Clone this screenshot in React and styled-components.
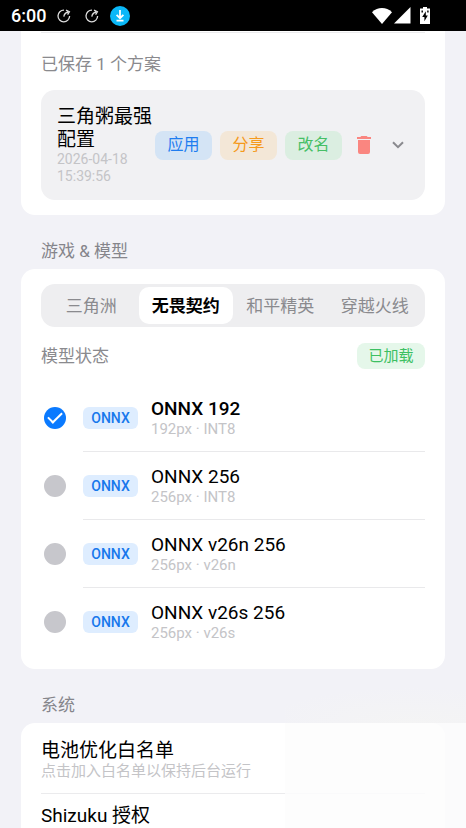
import React, { useState } from "react";
import styled, { createGlobalStyle } from "styled-components";

const GlobalStyle = createGlobalStyle`
  *, *::before, *::after { box-sizing: border-box; }
  html, body { margin: 0; height: 100%; overflow: hidden; }
  body {
    background: #f2f2f7;
    color: #000;
    font-family: Roboto, "Noto Sans CJK SC", sans-serif;
    -webkit-font-smoothing: antialiased;
  }
  #root { height: 100%; }
  button, input { font: inherit; margin: 0; }
  h2, p { margin: 0; font-weight: 400; }
`;

const Screen = styled.div`
  position: relative;
  height: 100%;
  display: flex;
  flex-direction: column;
  overflow: hidden;
`;

const StatusBar = styled.header`
  flex: none;
  height: 31px;
  padding: 0 36px 0 11px;
  display: flex;
  align-items: center;
  justify-content: space-between;
  background: #000;
  color: #fff;
`;

const StatusGroup = styled.div`
  display: flex;
  align-items: center;
  gap: ${(p) => p.$gap}px;
`;

const Clock = styled.span`
  font-size: 18px;
  font-weight: 500;
  line-height: 22px;
`;

const Content = styled.main`
  flex: 1;
  min-height: 0;
  overflow: hidden;
  padding: 0 21px;
`;

const Card = styled.section`
  background: #fff;
  border-radius: ${(p) => (p.$continued ? "0 0 14px 14px" : "14px")};
  padding: ${(p) => p.$pad || "15px 20px 14px"};
`;

const Rule = styled.div`
  height: 1px;
  background: #ebebed;
`;

const Caption = styled.p`
  font-size: 17px;
  line-height: 24px;
  color: #8a8a8e;
`;

const CaptionRow = styled.div`
  padding-top: 19px;
`;

const SectionTitle = styled.h2`
  padding: 24px 20px 6px;
  font-size: 17px;
  line-height: 24px;
  color: #85858b;
`;

const Preset = styled.div`
  display: flex;
  align-items: center;
  margin-top: 14px;
  padding: 15px 16px;
  border-radius: 14px;
  background: #f1f1f3;
`;

const PresetText = styled.div`
  flex: 1;
  min-width: 0;
`;

const ItemTitle = styled.div`
  font-size: 19px;
  line-height: 23px;
  font-weight: ${(p) => (p.$strong ? 500 : 400)};
`;

const ItemNote = styled.div`
  font-size: ${(p) => p.$size || 15}px;
  line-height: ${(p) => p.$line || 18}px;
  color: #c4c4c7;
`;

const Actions = styled.div`
  display: flex;
  gap: 8px;
`;

const tones = {
  blue: ["#d4e4f5", "#1f7df0"],
  orange: ["#f3e7d7", "#f59a1c"],
  green: ["#dbeee1", "#46bf66"],
};

const ActionButton = styled.button`
  width: 57px;
  height: 29px;
  padding: 0;
  border: 0;
  border-radius: 8px;
  font-size: 16px;
  line-height: 28px;
  background: ${(p) => tones[p.$tone][0]};
  color: ${(p) => tones[p.$tone][1]};
`;

const IconButton = styled.button`
  width: ${(p) => p.$width}px;
  height: 34px;
  padding: 0;
  border: 0;
  background: none;
  display: grid;
  place-items: center;
`;

const Segments = styled.div`
  display: grid;
  grid-template-columns: repeat(4, 1fr);
  padding: 3px;
  height: 43px;
  border-radius: 14px;
  background: #eeeef0;
`;

const Segment = styled.button`
  padding: 0 0 2px;
  border: 0;
  border-radius: 10px;
  font-size: 17px;
  font-weight: ${(p) => (p.$active ? 700 : 400)};
  background: ${(p) => (p.$active ? "#fff" : "transparent")};
  color: ${(p) => (p.$active ? "#000" : "#8a8a8e")};
`;

const StateRow = styled.div`
  display: flex;
  align-items: center;
  justify-content: space-between;
  padding: 16px 0 15px;
`;

const StateBadge = styled.span`
  min-width: 68px;
  border-radius: 8px;
  text-align: center;
  font-size: 15px;
  line-height: 26px;
  background: #e5f7ea;
  color: #3cc062;
`;

const ModelRow = styled.label`
  display: flex;
  align-items: center;
  padding-left: 3px;
`;

const Radio = styled.input`
  appearance: none;
  flex: none;
  width: 22px;
  height: 22px;
  border-radius: 50%;
  background: #c7c7cc;
  display: grid;
  place-items: center;
  &:checked { background: #0a7aff; }
  &:checked::after {
    content: "";
    width: 14px;
    height: 8px;
    margin-top: -4px;
    border: solid #fff;
    border-width: 0 0 2px 2px;
    transform: rotate(-45deg);
  }
`;

const ModelBody = styled.div`
  flex: 1;
  display: flex;
  align-items: center;
  gap: 13px;
  min-height: 67px;
  margin-left: 17px;
`;

const ModelItem = styled.div`
  & + &::before {
    content: "";
    display: block;
    height: 1px;
    margin-left: 42px;
    background: #e9e9eb;
  }
`;

const Tag = styled.span`
  width: 55px;
  border-radius: 6px;
  text-align: center;
  font-size: 14px;
  font-weight: 500;
  line-height: 22px;
  background: #deedff;
  color: #1778ec;
`;

const SettingRow = styled.div`
  padding: ${(p) => (p.$first ? 16 : 10)}px 0 13px;
`;

const Glow = styled.div`
  position: absolute;
  right: 0;
  bottom: 0;
  width: 181px;
  height: 105px;
  background: rgba(253, 253, 253, 0.85);
  pointer-events: none;
  &::before {
    content: "";
    position: absolute;
    left: 0;
    right: 0;
    bottom: 100%;
    height: 36px;
    background: radial-gradient(ellipse 150px 36px at 70% 100%, rgba(244, 244, 244, 0.95), rgba(242, 242, 244, 0));
  }
`;

const SyncIcon = () => (
  <svg width="14" height="14" viewBox="0 0 14 14" fill="none" stroke="#dcdcdc" strokeWidth="1.3">
    <path d="M7 1.2A5.8 5.8 0 1 0 12.6 7" />
    <path d="M6.8 7.6C7.2 5.2 8.6 3.6 11 3M9 1.2l3.4 1.5-1.8 3" />
  </svg>
);

const DownloadIcon = () => (
  <svg width="20" height="20" viewBox="0 0 20 20">
    <circle cx="10" cy="10" r="10" fill="#0ab8f8" />
    <path d="M10 4v8M6.6 8.8 10 12.2l3.4-3.4M6.5 14.6h7" fill="none" stroke="#fff" strokeWidth="1.8" />
  </svg>
);

const WifiIcon = () => (
  <svg width="20" height="16" viewBox="0 0 20 16">
    <path d="M0 4.2C5.7-1.4 14.3-1.4 20 4.2L10 16z" fill="#fff" />
  </svg>
);

const SignalIcon = () => (
  <svg width="17" height="17" viewBox="0 0 17 17">
    <path d="M16.5 0v16.5H0z" fill="#fff" />
  </svg>
);

const BatteryIcon = () => (
  <svg width="10" height="17" viewBox="0 0 10 17">
    <path d="M3 0h4v1.6h3V17H0V1.6h3z" fill="#fff" />
    <path d="M5.8 4.3 2.2 10h2.2v4.2L7.8 8.6H5.8zM1.5 3.6h1.4v2H1.5zM7.2 3.6h1.4v2H7.2z" fill="#000" />
  </svg>
);

const TrashIcon = () => (
  <svg width="14" height="18" viewBox="0 0 14 18" fill="#fa8680">
    <path d="M4.3 0h5.4l1 1H14v2H0V1h3.3zM1 4h12v12a2 2 0 0 1-2 2H3a2 2 0 0 1-2-2z" />
  </svg>
);

const ChevronIcon = () => (
  <svg width="12" height="8" viewBox="0 0 12 8" fill="none" stroke="#8a8a8e" strokeWidth="2">
    <path d="M1 1.2 6 6.2l5-5" />
  </svg>
);

const games = ["三角洲", "无畏契约", "和平精英", "穿越火线"];

const models = [
  { name: "ONNX 192", note: "192px · INT8" },
  { name: "ONNX 256", note: "256px · INT8" },
  { name: "ONNX v26n 256", note: "256px · v26n" },
  { name: "ONNX v26s 256", note: "256px · v26s" },
];

export default function App() {
  const [game, setGame] = useState(1);
  const [model, setModel] = useState(0);

  return (
    <>
      <GlobalStyle />
      <Screen>
        <StatusBar>
          <StatusGroup $gap={11}>
            <Clock>6:00</Clock>
            <StatusGroup $gap={14}>
              <SyncIcon />
              <SyncIcon />
            </StatusGroup>
            <DownloadIcon />
          </StatusGroup>
          <StatusGroup $gap={9}>
            <StatusGroup $gap={2}>
              <WifiIcon />
              <SignalIcon />
            </StatusGroup>
            <BatteryIcon />
          </StatusGroup>
        </StatusBar>

        <Content>
          <Card $continued $pad="1px 20px 15px">
            <Rule />
            <CaptionRow>
              <Caption as="h2">已保存 1 个方案</Caption>
            </CaptionRow>
            <Preset>
              <PresetText>
                <ItemTitle>三角粥最强配置</ItemTitle>
                <ItemNote $size={14} $line={17}>2026-04-18 15:39:56</ItemNote>
              </PresetText>
              <Actions>
                <ActionButton $tone="blue">应用</ActionButton>
                <ActionButton $tone="orange">分享</ActionButton>
                <ActionButton $tone="green">改名</ActionButton>
              </Actions>
              <IconButton $width={44} aria-label="删除"><TrashIcon /></IconButton>
              <IconButton $width={23} aria-label="展开"><ChevronIcon /></IconButton>
            </Preset>
          </Card>

          <SectionTitle>游戏 &amp; 模型</SectionTitle>
          <Card>
            <Segments>
              {games.map((name, i) => (
                <Segment key={name} $active={i === game} aria-pressed={i === game} onClick={() => setGame(i)}>
                  {name}
                </Segment>
              ))}
            </Segments>
            <StateRow>
              <Caption>模型状态</Caption>
              <StateBadge>已加载</StateBadge>
            </StateRow>
            {models.map((m, i) => (
              <ModelItem key={m.name}>
                <ModelRow>
                  <Radio type="radio" name="model" checked={i === model} onChange={() => setModel(i)} />
                  <ModelBody>
                    <Tag>ONNX</Tag>
                    <div>
                      <ItemTitle $strong={i === model}>{m.name}</ItemTitle>
                      <ItemNote>{m.note}</ItemNote>
                    </div>
                  </ModelBody>
                </ModelRow>
              </ModelItem>
            ))}
          </Card>

          <SectionTitle>系统</SectionTitle>
          <Card $pad="0 20px 15px">
            <SettingRow $first>
              <ItemTitle>电池优化白名单</ItemTitle>
              <ItemNote>点击加入白名单以保持后台运行</ItemNote>
            </SettingRow>
            <Rule />
            <SettingRow>
              <ItemTitle>Shizuku 授权</ItemTitle>
            </SettingRow>
          </Card>
        </Content>
        <Glow />
      </Screen>
    </>
  );
}
